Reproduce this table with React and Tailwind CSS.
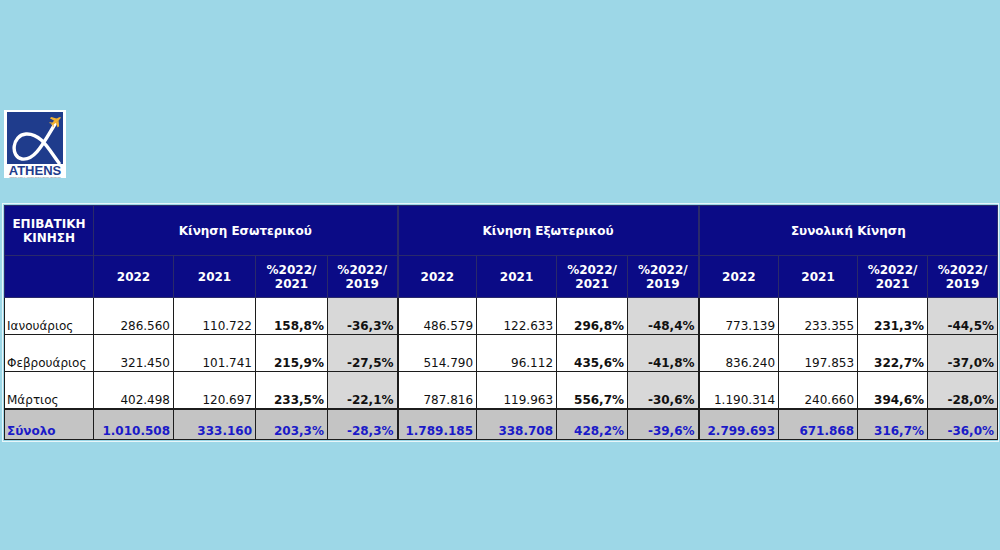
import React from "react";

const widths = [89, 80, 82, 72, 70, 79, 80, 71, 71, 80, 79, 70, 70];

const rows = [
  ["Ιανουάριος", "286.560", "110.722", "158,8%", "-36,3%", "486.579", "122.633", "296,8%", "-48,4%", "773.139", "233.355", "231,3%", "-44,5%"],
  ["Φεβρουάριος", "321.450", "101.741", "215,9%", "-27,5%", "514.790", "96.112", "435,6%", "-41,8%", "836.240", "197.853", "322,7%", "-37,0%"],
  ["Μάρτιος", "402.498", "120.697", "233,5%", "-22,1%", "787.816", "119.963", "556,7%", "-30,6%", "1.190.314", "240.660", "394,6%", "-28,0%"],
];

const total = ["Σύνολο", "1.010.508", "333.160", "203,3%", "-28,3%", "1.789.185", "338.708", "428,2%", "-39,6%", "2.799.693", "671.868", "316,7%", "-36,0%"];

// κάθετη διαχωριστική γραμμή ανά στήλη
function sep(i) {
  if (i === 5 || i === 9) return "border-l-2";
  return "border-l";
}

function Logo() {
  return (
    <div className="w-[62px] h-[68px] bg-white flex flex-col items-center pt-[2px]">
      <svg width="56" height="52" viewBox="0 0 56 52">
        <rect x="0" y="0" width="56" height="52" fill="#1f3c8c" />
        <path
          d="M52 51 C42 38 34 21 19 22 C5 23 3 45 15 47 C28 49 37 30 48 12"
          fill="none"
          stroke="#fff"
          strokeWidth="3.4"
          strokeLinecap="round"
        />
        <g transform="translate(49 9) rotate(-40)" fill="#f2b233">
          <ellipse cx="0" cy="0" rx="6" ry="1.4" />
          <path d="M-1 -1 L-3 -6 L-1 -6 L2.5 -1 Z" />
          <path d="M-1 1 L-3 6 L-1 6 L2.5 1 Z" />
          <path d="M-5 -0.5 L-6.5 -3 L-5.5 -3 L-3.5 -0.5 Z" />
          <path d="M-5 0.5 L-6.5 3 L-5.5 3 L-3.5 0.5 Z" />
        </g>
      </svg>
      <div
        className="text-[13px] leading-[11px] font-bold text-[#1f3c8c] mt-[1px]"
        style={{ fontFamily: "'Liberation Sans', Arial, sans-serif" }}
      >
        ATHENS
      </div>
      <div
        className="text-[2px] leading-[2px] text-gray-500 whitespace-nowrap"
        style={{ fontFamily: "'Liberation Sans', sans-serif" }}
      >
        INTERNATIONAL AIRPORT ELEFTHERIOS VENIZELOS
      </div>
    </div>
  );
}

export default function App() {
  return (
    <div
      className="w-[1000px] h-[550px] bg-[#9dd7e7] pt-[110px] overflow-hidden"
      style={{ fontFamily: "'DejaVu Sans', Verdana, 'Noto Sans', sans-serif" }}
    >
      <div className="pl-[4px]">
        <Logo />
      </div>

      <div className="mt-[25px] ml-[2px] w-[997px] border border-[#e8f6fa] p-[1px]">
        <table className="table-fixed border-collapse w-[993px] text-[12px] leading-[14px]">
          <colgroup>
            {widths.map((w, i) => (
              <col key={i} style={{ width: w }} />
            ))}
          </colgroup>
          <thead>
            <tr className="h-[50px] bg-[#0b0b86] text-white font-bold">
              <th className="border border-[#2a2a6a] text-center align-middle">
                ΕΠΙΒΑΤΙΚΗ
                <br />
                ΚΙΝΗΣΗ
              </th>
              <th colSpan={4} className="border border-[#2a2a6a] text-center">Κίνηση Εσωτερικού</th>
              <th colSpan={4} className="border border-[#2a2a6a] border-l-2 text-center">Κίνηση Εξωτερικού</th>
              <th colSpan={4} className="border border-[#2a2a6a] border-l-2 text-center">Συνολική Κίνηση</th>
            </tr>
            <tr className="h-[42px] bg-[#0b0b86] text-white font-bold">
              <th className="border border-[#2a2a6a]"></th>
              {[1, 2, 3].map((g) => (
                <React.Fragment key={g}>
                  <th className={`border border-[#2a2a6a] text-center ${g > 1 ? "border-l-2" : ""}`}>2022</th>
                  <th className="border border-[#2a2a6a] text-center">2021</th>
                  <th className="border border-[#2a2a6a] text-center">
                    %2022/
                    <br />
                    2021
                  </th>
                  <th className="border border-[#2a2a6a] text-center">
                    %2022/
                    <br />
                    2019
                  </th>
                </React.Fragment>
              ))}
            </tr>
          </thead>
          <tbody>
            {rows.map((r, ri) => (
              <tr key={ri} className="h-[37px]">
                {r.map((c, i) => (
                  <td
                    key={i}
                    className={`border-y border-r border-[#1c1c1c] ${sep(i)} align-bottom pb-[1px] whitespace-nowrap text-[#111] ${
                      i === 0 ? "text-left pl-[2px]" : "text-right pr-[3px]"
                    } ${i % 4 === 0 && i > 0 ? "bg-[#d8d8d8] font-bold" : "bg-white"} ${i % 4 === 3 ? "font-bold" : ""}`}
                  >
                    {c}
                  </td>
                ))}
              </tr>
            ))}
            <tr className="h-[31px] bg-[#c4c4c4]">
              {total.map((c, i) => (
                <td
                  key={i}
                  className={`border-b border-r border-t-2 border-[#1c1c1c] ${sep(i)} align-bottom pb-[1px] whitespace-nowrap font-bold text-[#1a1ac8] ${
                    i === 0 ? "text-left pl-[2px]" : "text-right pr-[3px]"
                  }`}
                >
                  {c}
                </td>
              ))}
            </tr>
          </tbody>
        </table>
      </div>
    </div>
  );
}
